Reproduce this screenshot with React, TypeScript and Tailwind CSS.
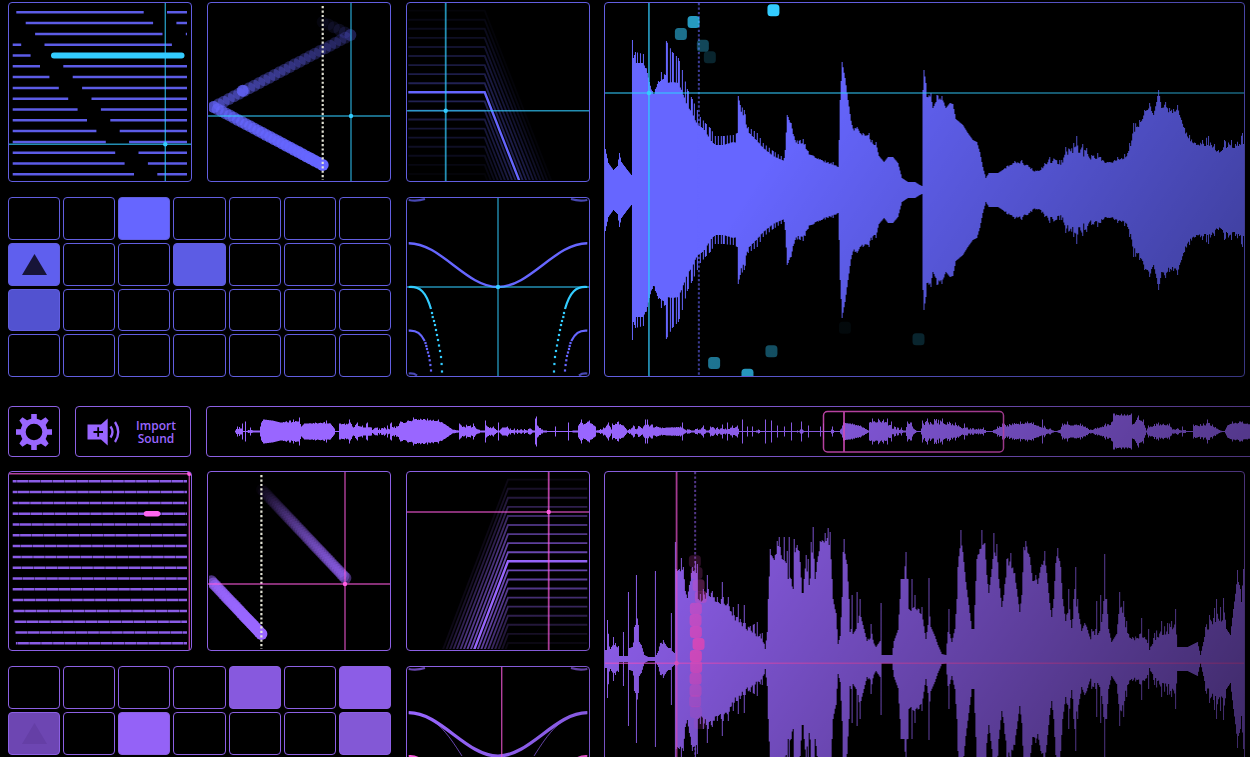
import type { ReactNode } from "react";
import clsx from "clsx";

// [x, body height, peak height]
type Key = [number, number, number?];

type Theme = {
  main: string;
  accent: string;
  border: string;
};

const BLUE: Theme = { main: "#6666ff", accent: "#33ccff", border: "border-[#625ee0]" };
const PURPLE: Theme = { main: "#9966ff", accent: "#ff5ce1", border: "border-[#8c60e4]" };

const WAVE_A: Key[] = [
  [0, 42], [1, 41], [4, 27], [9, 20], [13, 24], [15, 37], [17, 28], [23, 20], [27, 15], [28, 130, 150],
  [29, 130, 132], [31, 127, 138], [39, 127, 136], [43, 117], [45, 108], [49, 93, 96], [53, 106], [57, 110, 118],
  [61, 112, 115], [62, 107, 149], [68, 108, 138], [74, 107, 132], [78, 98, 120], [83, 84, 101], [88, 77, 91],
  [93, 65, 80], [96, 64, 73], [101, 59, 67], [106, 50, 62], [111, 45, 54], [119, 45, 54], [129, 48, 55],
  [133, 47, 57], [134, 80, 94], [136, 80, 85], [140, 73, 80], [144, 58, 63], [153, 49, 57], [159, 42, 47],
  [169, 34, 39], [180, 29, 32], [181, 40], [183, 75], [187, 64, 67], [191, 46, 50], [196, 46, 50],
  [199, 47, 51], [204, 36, 39], [216, 29, 31], [229, 25, 28], [234, 23], [235, 50], [236, 90], [238, 128],
  [241, 112], [244, 90], [248, 62, 65], [251, 57, 62], [253, 60, 63], [259, 53, 57], [265, 53, 57],
  [268, 45, 50], [272, 45, 48], [275, 34], [280, 28], [284, 33], [289, 33], [294, 27], [298, 12], [304, 8],
  [311, 8], [316, 5], [318, 4], [319, 100], [320, 120], [322, 107], [323, 93], [327, 92, 97], [329, 82],
  [333, 90, 95], [338, 90, 94], [342, 82], [346, 87], [349, 86], [352, 71], [359, 65], [364, 57], [369, 50],
  [373, 48], [376, 38], [379, 23], [382, 12], [385, 17], [394, 17], [403, 22, 24], [411, 27, 29],
  [418, 26, 30], [424, 22, 25], [433, 17, 19], [441, 23, 27], [446, 27, 33], [458, 25, 30], [462, 35, 43],
  [473, 36, 54], [479, 32, 46], [483, 36, 42], [488, 29, 35], [494, 31, 37], [506, 25, 28], [514, 30, 33],
  [521, 31, 36], [526, 38, 47], [530, 57, 67], [536, 63, 70], [541, 76, 80], [546, 82, 87], [550, 75],
  [553, 88], [555, 100], [558, 82], [562, 83, 88], [566, 76, 82], [570, 77, 81], [574, 80, 85], [578, 70],
  [581, 58, 62], [586, 50, 55], [592, 43, 47], [599, 44, 50], [605, 44, 54], [611, 41, 46], [615, 36, 40],
  [621, 42, 50], [628, 42, 50], [632, 42, 46], [639, 46, 57], [642, 46, 57],
];

const WAVE_B: Key[] = [
  [0, 9], [2, 9], [3, 9, 39], [6, 10], [9, 15, 22], [14, 10, 13], [15, 3], [18, 3], [19, 3, 27], [20, 3],
  [23, 3], [24, 10, 67], [25, 11], [28, 12], [30, 18, 32], [31, 22, 34], [32, 20, 84], [34, 18, 34], [37, 14],
  [40, 4], [44, 2], [50, 2], [51, 3, 88], [52, 4], [56, 12, 16], [59, 15, 19], [64, 11], [66, 11],
  [67, 12, 46], [68, 8], [70, 6], [71, 80, 117], [72, 88, 90], [75, 85, 90], [77, 88, 101], [79, 84, 92],
  [81, 68], [83, 61], [85, 74], [88, 84, 92], [91, 86, 98], [93, 84, 95], [94, 60], [96, 57, 65],
  [99, 58, 70], [102, 61, 66], [103, 62, 84], [104, 62, 70], [108, 60, 68], [113, 55, 62], [117, 54, 60],
  [118, 54, 77], [119, 54, 62], [124, 53, 62], [129, 40, 52], [133, 36, 42], [134, 35, 55], [136, 34, 40],
  [139, 32, 36], [140, 32, 54], [141, 30, 36], [146, 26, 33], [153, 22, 37], [158, 20, 26], [161, 10],
  [163, 27], [164, 60], [166, 105, 110], [170, 95, 99], [173, 110, 118], [175, 116, 122], [178, 95, 100],
  [180, 90, 122], [182, 78, 96], [183, 80, 108], [184, 76, 80], [185, 72, 122], [187, 68, 80], [189, 70],
  [190, 105, 120], [193, 110, 114], [195, 108], [196, 97], [198, 66], [200, 66, 80], [202, 75, 104],
  [204, 74, 100], [205, 74], [207, 80, 117], [209, 110, 132], [211, 77, 80], [213, 95, 97], [216, 110, 118],
  [221, 118, 126], [224, 118, 131], [226, 110, 127], [228, 78, 80], [229, 60], [232, 44, 46], [234, 15],
  [236, 23], [238, 60, 62], [239, 105, 107], [240, 108, 120], [243, 95], [245, 60], [246, 27], [247, 30],
  [248, 30, 64], [249, 25], [252, 30], [253, 35, 67], [254, 36], [256, 42, 60], [259, 34], [263, 18],
  [267, 20, 35], [272, 12], [276, 18], [277, 20, 56], [278, 4], [288, 4], [290, 18], [294, 29], [296, 60],
  [297, 80], [300, 80], [302, 80, 107], [304, 80], [305, 50], [307, 48], [308, 50, 80], [311, 50, 64],
  [315, 46, 50], [318, 44, 52], [322, 20], [324, 34], [325, 40, 81], [327, 32], [331, 23], [334, 14],
  [338, 5], [342, 4], [344, 27], [345, 28, 50], [348, 17], [351, 30], [353, 60], [354, 92], [357, 120, 129],
  [359, 107], [362, 77], [365, 54], [368, 30], [370, 30], [372, 78], [373, 100], [378, 112, 129],
  [381, 112, 116], [383, 84], [385, 66], [388, 90], [390, 108, 126], [393, 98, 115], [395, 80], [398, 52],
  [400, 64], [403, 90, 100], [407, 94, 106], [411, 80, 86], [413, 70], [416, 47], [418, 64], [420, 108, 112],
  [422, 108, 118], [426, 102], [429, 78], [432, 78, 84], [434, 75], [437, 92], [441, 95, 108], [443, 86],
  [446, 56], [448, 42], [450, 60], [452, 96], [454, 105, 111], [457, 92], [459, 60], [462, 38],
  [465, 50, 70], [468, 31], [470, 48, 60], [471, 55, 70], [472, 55, 92], [474, 50, 60], [478, 28], [481, 36],
  [488, 17, 30], [492, 22, 30], [493, 22, 58], [494, 24], [496, 28], [497, 28, 64], [499, 45], [500, 58],
  [501, 60, 105], [503, 60], [505, 30], [508, 17], [513, 25], [516, 50, 67], [520, 45, 58], [523, 24, 38],
  [529, 18, 22], [536, 20, 25], [538, 22, 41], [541, 18, 22], [545, 14, 30], [546, 9], [551, 18, 26],
  [558, 24, 38], [564, 24, 36], [568, 28, 38], [572, 34, 50], [574, 12], [584, 12], [594, 17], [597, 4],
  [600, 17], [602, 27, 32], [606, 30, 44], [613, 38, 60], [617, 36, 52], [620, 40, 61], [623, 30],
  [627, 24], [630, 50], [634, 80, 89], [637, 70], [638, 57], [640, 90], [642, 90],
];

const OVERVIEW: Key[] = [
  [29, 1], [31, 2, 5], [36, 3, 8], [37, 0], [38, 0], [39, 0, 10], [40, 0], [44, 1, 4], [47, 1], [53, 1],
  [55, 9], [57, 12], [66, 11], [74, 9], [83, 9, 11], [87, 9, 12], [93, 10, 14], [95, 5], [98, 8],
  [109, 8, 9], [120, 8, 11], [124, 8], [128, 3], [129, 0], [132, 0], [133, 8], [138, 6, 8], [143, 8, 12],
  [147, 4], [151, 6, 9], [156, 4, 6], [161, 4, 9], [165, 1, 4], [181, 2, 6], [185, 2, 9], [191, 3, 5],
  [194, 8, 10], [202, 9, 11], [207, 11, 14], [221, 11, 13], [232, 10, 12], [239, 7], [246, 2], [252, 1],
  [253, 4, 8], [267, 4, 8], [274, 1], [278, 1], [279, 2, 11], [281, 3, 5], [287, 3, 5], [291, 1],
  [292, 1, 9], [293, 1], [296, 4], [301, 4, 5], [304, 1, 3], [324, 1, 3], [328, 1], [329, 6, 13],
  [330, 6, 15], [332, 4, 5], [336, 1, 2], [344, 0], [348, 0], [349, 0, 5], [350, 0], [361, 0], [362, 0, 9],
  [363, 0], [367, 1], [371, 1], [372, 6], [375, 9, 12], [377, 7], [383, 9, 11], [389, 5], [390, 1],
  [397, 2, 4], [402, 6, 9], [405, 2], [406, 6, 8], [412, 7, 10], [417, 6], [421, 1], [427, 2, 6],
  [437, 3, 5], [439, 3, 12], [441, 3, 12], [446, 4, 7], [454, 3, 4], [461, 4], [474, 4, 5], [476, 3, 9],
  [477, 1, 3], [491, 1, 3], [497, 3, 6], [500, 1], [504, 1, 5], [516, 2, 7], [519, 1, 3], [521, 2, 9],
  [526, 3, 6], [531, 3, 6], [533, 0], [535, 0], [536, 1, 12], [537, 0], [540, 0], [541, 0, 5], [542, 0],
  [545, 0], [546, 0, 5], [547, 0], [552, 0, 2], [558, 0], [559, 0, 12], [560, 0], [564, 0], [565, 0, 11],
  [566, 0], [570, 0], [571, 0, 6], [572, 0], [577, 0], [578, 0, 5], [579, 0], [584, 0], [585, 0, 9],
  [586, 0], [594, 0, 2], [595, 0, 10], [596, 0, 2], [601, 0], [602, 0, 6], [603, 0], [613, 0], [614, 0, 5],
  [616, 0], [617, 0, 8], [618, 0], [624, 0], [626, 1, 5], [629, 0], [634, 0, 2], [637, 9], [646, 7, 8],
  [654, 5, 6], [662, 1], [663, 8, 9], [666, 9, 13], [681, 9, 13], [682, 4, 6], [685, 2, 10], [691, 2, 4],
  [695, 1, 4], [699, 1], [701, 7, 10], [705, 7, 9], [707, 3], [711, 0], [714, 0], [716, 6, 11],
  [721, 7, 13], [736, 7, 13], [749, 6, 9], [756, 3], [758, 3, 8], [761, 2, 4], [772, 2, 3], [777, 2, 4],
  [781, 0], [785, 0], [791, 3, 5], [796, 5, 8], [806, 5, 8], [814, 7, 10], [821, 8, 10], [827, 7, 9],
  [835, 4], [836, 4, 12], [839, 2, 4], [844, 2, 3], [849, 0], [854, 2], [856, 5, 8], [861, 7, 10],
  [864, 6], [874, 6, 8], [879, 4, 5], [884, 1, 2], [891, 3, 4], [899, 5, 8], [906, 7, 10], [907, 16, 18],
  [925, 16, 18], [926, 7], [928, 8], [932, 12, 16], [937, 9, 12], [940, 1], [942, 4, 6], [952, 6, 9],
  [963, 6, 8], [966, 2], [976, 1, 5], [981, 0], [986, 0], [987, 5, 7], [997, 5, 8], [1001, 7, 12],
  [1006, 5, 7], [1014, 1], [1018, 0], [1021, 6], [1026, 8, 10], [1036, 8, 10], [1044, 7], [1060, 5],
];

function noise(x: number) {
  const n = Math.sin(x * 127.1) * 43758.5453;
  return n - Math.floor(n);
}

// columns left of `comb` get evenly spaced teeth, the others get noise
function wavePath(keys: Key[], center: number, comb = 0) {
  const first = keys[0][0];
  const last = keys[keys.length - 1][0];
  let k = 0;
  let top = `M${first} ${center}`;
  let bottom = "";
  for (let x = first; x < last; x++) {
    while (keys[k + 1][0] <= x) k++;
    const [x0, lo0, hi0 = lo0] = keys[k];
    const [x1, lo1, hi1 = lo1] = keys[k + 1];
    const t = (x - x0) / (x1 - x0);
    const lo = lo0 + (lo1 - lo0) * t;
    const hi = hi0 + (hi1 - hi0) * t;
    let mix = x < comb ? Number(x % 3 === 0) : noise(x) ** 2;
    if (x === x0) mix = 1;
    const h = Math.max(0.5, lo + (hi - lo) * mix);
    top += `V${(center - h).toFixed(1)}H${x + 1}`;
    bottom = `V${(center + h).toFixed(1)}H${x}` + bottom;
  }
  return `${top}${bottom}Z`;
}

function Panel({
  theme,
  label,
  width,
  height,
  className,
  children,
}: {
  theme: Theme;
  label: string;
  width: number;
  height: number;
  className?: string;
  children: ReactNode;
}) {
  return (
    <div className={clsx("min-w-0 overflow-hidden rounded-[4px] border", theme.border, className)}>
      <svg
        role="img"
        aria-label={label}
        viewBox={`1 1 ${width - 2} ${height - 2}`}
        preserveAspectRatio="none"
        className="block h-full w-full"
      >
        {children}
      </svg>
    </div>
  );
}

function Crosshair({ x, y, color, wide }: { x: number; y: number; color: string; wide?: boolean }) {
  return (
    <g stroke={color} fill={color}>
      <path d={`M0 ${y}H700`} strokeWidth={1.4} opacity={0.7} />
      <path d={`M${x} 0V380`} strokeWidth={wide ? 1.8 : 1.4} opacity={0.7} />
      <circle cx={x} cy={y} r={2.2} stroke="none" />
    </g>
  );
}

const ROWS = Array.from({ length: 16 }, (_, i) => i);

function GrainsA({ theme }: { theme: Theme }) {
  return (
    <Panel theme={theme} label="Grains" width={184} height={180}>
      {ROWS.map((i) => (
        <path
          key={i}
          d={`M4.7 ${10.3 + i * 10.8}H179`}
          stroke={theme.main}
          strokeWidth={2.5}
          opacity={0.9}
          strokeDasharray="127.4 23.3"
          strokeDashoffset={-(3.6 + 9.4 * i)}
        />
      ))}
      <path d="M46 53.5H173.5" stroke={theme.accent} strokeWidth={6} strokeLinecap="round" />
      <Crosshair x={157.3} y={142.3} color={theme.accent} />
    </Panel>
  );
}

function GrainsB({ theme }: { theme: Theme }) {
  return (
    <Panel theme={theme} label="Grains" width={184} height={180}>
      {ROWS.map((i) => (
        <path
          key={i}
          d={`M${4.7 + Math.max(0, i - 11) * 0.8} ${10.3 + i * 10.8}H179`}
          stroke={theme.main}
          strokeWidth={2.5}
          opacity={0.9}
          strokeDasharray="11.5 0.4"
          strokeDashoffset={7.5 - i * 0.6}
        />
      ))}
      <path d="M138.5 42.7H149.5" stroke="#ff66f0" strokeWidth={5.4} strokeLinecap="round" />
      <Crosshair x={181.3} y={2.7} color={theme.accent} />
    </Panel>
  );
}

// x0, y0, x1, y1, circle count, opacity at both ends
type Leg = [number, number, number, number, number, number, number];

function Trail({ legs, color }: { legs: Leg[]; color: string }) {
  return (
    <g fill={color}>
      {legs.map(([x0, y0, x1, y1, n, from, to], k) =>
        Array.from({ length: n }, (_, i) => {
          const t = i / (n - 1);
          return (
            <circle
              key={`${k}-${i}`}
              cx={x0 + (x1 - x0) * t}
              cy={y0 + (y1 - y0) * t}
              r={6}
              opacity={from + (to - from) * t}
            />
          );
        })
      )}
    </g>
  );
}

function Bounce({
  theme,
  legs,
  dots,
  x,
  y,
  children,
}: {
  theme: Theme;
  legs: Leg[];
  dots: number;
  x: number;
  y: number;
  children?: ReactNode;
}) {
  return (
    <Panel theme={theme} label="Position" width={184} height={180}>
      <svg x={2} y={2} width={180} height={176} viewBox="2 2 180 176">
        <Trail legs={legs} color={theme.main} />
        {children}
      </svg>
      <path d={`M${dots} 4V178`} stroke="#e4e4d6" strokeWidth={2.2} strokeDasharray="2.2 2.25" />
      <Crosshair x={x} y={y} color={theme.accent} />
    </Panel>
  );
}

function Filter({
  theme,
  shape,
  strength,
  x,
  y,
}: {
  theme: Theme;
  shape: string;
  strength: number;
  x: number;
  y: number;
}) {
  return (
    <Panel theme={theme} label="Filter" width={184} height={180}>
      <svg x={2} y={2} width={180} height={176} viewBox="2 2 180 176" fill="none" stroke={theme.main}>
        {Array.from({ length: 19 }, (_, i) => i - 9)
          .filter((i) => i !== 0)
          .map((i) => (
            <path
              key={i}
              d={shape}
              transform={`translate(0 ${i * 9.07})`}
              strokeWidth={1.9}
              opacity={strength * (1 - Math.abs(i) / 10)}
            />
          ))}
        <path d={shape} strokeWidth={2.4} />
      </svg>
      <Crosshair x={x} y={y} color={theme.accent} wide />
    </Panel>
  );
}

const ACCENT_DOTS = [
  [26, 116], [26.7, 120], [28, 124], [29, 128], [30, 133], [31, 138],
  [32, 143], [33, 148.5], [34, 154], [35, 160], [35.6, 167], [36, 174.5],
];
const MAIN_DOTS = [
  [19.5, 146], [20.3, 149], [21, 152], [22, 155.5], [23, 159], [23.7, 163.3], [24.4, 168], [25, 173.5],
];

function CurveA({ theme }: { theme: Theme }) {
  const half = (
    <g fill="none" strokeWidth={2.2}>
      <path d="M2.7 90C14 89 20 95 25 112" stroke={theme.accent} />
      <path d="M2.7 133.7C11 133 15 137 18.7 144" stroke={theme.main} />
      <path d="M2.7 3Q11 4.500 19 2" stroke={theme.main} opacity={0.7} />
      <path d="M2.7 176.5Q8 176 11 178.5" stroke={theme.main} opacity={0.7} />
      {ACCENT_DOTS.map(([cx, cy]) => (
        <rect key={cy} x={cx - 1.1} y={cy - 1.1} width={2.2} height={2.2} fill={theme.accent} />
      ))}
      {MAIN_DOTS.map(([cx, cy]) => (
        <rect key={cy} x={cx - 1.1} y={cy - 1.1} width={2.2} height={2.2} fill={theme.main} />
      ))}
    </g>
  );
  return (
    <Panel theme={theme} label="Shape" width={184} height={180}>
      <path
        d="M2.7 46.2C35 46.2 60 90 92 90S149 46.2 181.3 46.2"
        fill="none"
        stroke={theme.main}
        strokeWidth={2.4}
      />
      {half}
      <g transform="translate(184 0) scale(-1 1)">{half}</g>
      <Crosshair x={92} y={90} color={theme.accent} />
    </Panel>
  );
}

function CurveB({ theme }: { theme: Theme }) {
  return (
    <Panel theme={theme} label="Shape" width={184} height={180}>
      <g fill="none" stroke={theme.main}>
        <path d="M2.7 46.7C35 46.7 60 90 92 90S149 46.7 181.3 46.7" strokeWidth={3.2} />
        <path d="M2.7 47C28 47 42 68 56 90" strokeWidth={1} opacity={0.7} />
        <path d="M181.3 47C156 47 142 68 128 90" strokeWidth={1} opacity={0.7} />
        <path d="M2.7 3Q11 4.5 19 2M181.3 3Q173 4.5 165 2" strokeWidth={2.2} opacity={0.7} />
      </g>
      <path d="M2.7 90Q9 89.5 14 93M181.3 90Q175 89.5 170 93" fill="none" stroke={theme.accent} strokeWidth={2} />
      <path d="M95.7 0V91" stroke={theme.accent} strokeWidth={1.4} opacity={0.75} />
    </Panel>
  );
}

function Pads({
  theme,
  lit,
  marker,
  faint,
}: {
  theme: Theme;
  lit: Record<number, string>;
  marker: number;
  faint?: boolean;
}) {
  return (
    <div className="col-span-2 grid grid-cols-7 grid-rows-4 gap-[3px]">
      {Array.from({ length: 28 }, (_, i) => (
        <button
          key={i}
          type="button"
          aria-label={`Pad ${i + 1}`}
          className={clsx("flex items-center justify-center rounded-[4px] border", theme.border, lit[i])}
        >
          {i === marker && (
            <svg
              viewBox="0 0 25 21"
              className={clsx("h-[21px] w-[25px]", faint ? "text-[#653fa6]" : "text-[#171438]")}
            >
              <path d="M12.5 0L25 21H0Z" fill="currentColor" />
            </svg>
          )}
        </button>
      ))}
    </div>
  );
}

function Waveform({
  theme,
  keys,
  comb,
  dots,
  x,
  y,
  trail,
  square,
}: {
  theme: Theme;
  keys: Key[];
  comb?: number;
  dots: number;
  x: number;
  y: number;
  trail: [number, number, number][];
  square: string;
}) {
  return (
    <Panel theme={theme} label="Waveform" width={642} height={375} className="flex-1">
      <path d={wavePath(keys, 188, comb)} fill={theme.main} />
      <path d={`M${dots} 1V374`} stroke={theme.main} strokeWidth={2} strokeDasharray="2.3 2.15" opacity={0.6} />
      {trail.map(([cx, cy, o]) => (
        <rect key={cy} x={cx - 6} y={cy - 6} width={12} height={12} rx={3.5} fill={square} opacity={o} />
      ))}
      <Crosshair x={x} y={y} color={theme.accent} wide />
    </Panel>
  );
}

function Deck({ left, wave }: { left: ReactNode; wave: ReactNode }) {
  return (
    <section className="flex shrink-0 gap-[14px]">
      <div className="grid w-[582px] shrink-0 grid-cols-3 grid-rows-[180px_180px] gap-[15px]">{left}</div>
      {wave}
    </section>
  );
}

function GearIcon() {
  return (
    <svg viewBox="-18 -18 36 36" className="h-9 w-9" fill="currentColor">
      <circle r={10.9} fill="none" stroke="currentColor" strokeWidth={5.2} />
      {[0, 90, 180, 270].map((a) => (
        <path key={a} d="M-2.8 -18H2.8V-12H-2.8Z" transform={`rotate(${a})`} />
      ))}
      {[45, 135, 225, 315].map((a) => (
        <path key={a} d="M-2.2 -18.5H2.2L3.5 -12H-3.5Z" transform={`rotate(${a})`} />
      ))}
    </svg>
  );
}

function SpeakerIcon() {
  return (
    <svg viewBox="0 0 33 28" className="h-7 w-[33px] shrink-0" fill="currentColor">
      <path d="M0.5 6.5H14L20.7 0.5V27.5L14 21.5H0.5Z" />
      <path d="M6.5 14H16M11.2 9.2V18.8" stroke="#000" strokeWidth={1.8} />
      <path
        d="M23.5 8.5Q27.5 14 23.5 19.5M28 4Q34.5 14 28 24"
        fill="none"
        stroke="currentColor"
        strokeWidth={2.3}
      />
    </svg>
  );
}

function Toolbar() {
  return (
    <section className="mt-[29px] mb-[14px] flex h-[51px] shrink-0 gap-[15px] text-[#9966ff]">
      <button
        type="button"
        aria-label="Settings"
        className="flex w-[52px] shrink-0 items-center justify-center rounded-[4px] border border-[#8c60e4]"
      >
        <GearIcon />
      </button>
      <button
        type="button"
        className="flex w-[116px] shrink-0 items-center justify-between rounded-[4px] border border-[#8c60e4] pr-3.5 pl-[11px]"
      >
        <SpeakerIcon />
        <span className="w-10 text-center font-['Open_Sans','Noto_Sans',sans-serif] text-[12px] leading-[13px] font-semibold">
          Import Sound
        </span>
      </button>
      <Panel theme={PURPLE} label="Overview" width={1060} height={51} className="-mr-[21px] flex-1">
        <path d={wavePath(OVERVIEW, 25.5)} fill={PURPLE.main} />
        <g fill="none" stroke={PURPLE.accent} opacity={0.85}>
          <rect x={617.5} y={5.5} width={180} height={40.5} rx={4} strokeWidth={1.5} />
          <path d="M638 5.5V46" strokeWidth={1.8} />
        </g>
      </Panel>
    </section>
  );
}

export default function App() {
  return (
    <main className="relative flex h-screen flex-col overflow-hidden bg-black pt-0.5 pr-[5px] pl-2">
      <Deck
        left={
          <>
            <GrainsA theme={BLUE} />
            <Bounce
              theme={BLUE}
              legs={[
                [115.7, 20, 143.4, 33, 6, 0.05, 0.14],
                [143.4, 33, 6.7, 105, 28, 0.18, 0.45],
                [6.7, 105, 115.7, 163, 28, 0.55, 1],
              ]}
              dots={115.7}
              x={144}
              y={114}
            >
              <circle cx={35.7} cy={88.7} r={6} fill={BLUE.main} opacity={0.75} />
            </Bounce>
            <Filter theme={BLUE} shape="M2.3 90.3H78.7L149 270" strength={0.36} x={39.7} y={108.7} />
            <Pads
              theme={BLUE}
              lit={{ 2: "bg-[#6666ff]", 7: "bg-[#5f5fee]", 10: "bg-[#5c5ce4]", 14: "bg-[#5252d0]" }}
              marker={7}
            />
            <CurveA theme={BLUE} />
          </>
        }
        wave={
          <Waveform
            theme={BLUE}
            keys={WAVE_A}
            comb={180}
            dots={95}
            x={45}
            y={91}
            square="#33ccff"
            trail={[
              [169.7, 8.3, 1],
              [89.7, 20, 0.75],
              [77, 32, 0.55],
              [99, 43.7, 0.35],
              [106, 55.3, 0.18],
              [241.3, 325.7, 0.05],
              [315, 337.3, 0.22],
              [167.7, 349.3, 0.42],
              [110.3, 361, 0.6],
              [143.7, 372.7, 0.8],
            ]}
          />
        }
      />
      <Toolbar />
      <Deck
        left={
          <>
            <GrainsB theme={PURPLE} />
            <Bounce
              theme={PURPLE}
              legs={[
                [55, 18.7, 138.4, 107, 44, 0.03, 0.4],
                [4.4, 110.3, 54.4, 163, 26, 0.5, 1],
              ]}
              dots={54.4}
              x={138}
              y={113}
            />
            <Filter theme={PURPLE} shape="M181.3 90.3H102L34 268" strength={0.78} x={142.7} y={41} />
            <Pads
              theme={PURPLE}
              lit={{
                4: "bg-[#8759de]",
                6: "bg-[#8c5de6]",
                7: "bg-[#6d46b2]",
                9: "bg-[#9462f7]",
                13: "bg-[#8358d6]",
              }}
              marker={7}
              faint
            />
            <CurveB theme={PURPLE} />
          </>
        }
        wave={
          <Waveform
            theme={PURPLE}
            keys={WAVE_B}
            dots={91.3}
            x={72.7}
            y={192.3}
            square="#ff55dd"
            trail={[
              [91, 90.3, 0.2],
              [92.7, 102, 0.22],
              [94.7, 114.3, 0.35],
              [97, 126, 0.4],
              [92, 137.7, 0.6],
              [91.7, 149.3, 0.7],
              [92, 161, 0.8],
              [94.7, 173, 0.95],
              [92, 185, 0.9],
              [92.3, 196, 0.8],
              [91.7, 207.7, 0.65],
              [91.7, 219.7, 0.5],
              [91.3, 230.3, 0.35],
              [92, 241, 0.2],
              [96, 252, 0.15],
            ]}
          />
        }
      />
      {/* light falls off towards the lower right corner */}
      <div className="pointer-events-none absolute inset-0 bg-[linear-gradient(123deg,transparent_50%,rgb(0_0_0/0.6)_100%)]" />
    </main>
  );
}
